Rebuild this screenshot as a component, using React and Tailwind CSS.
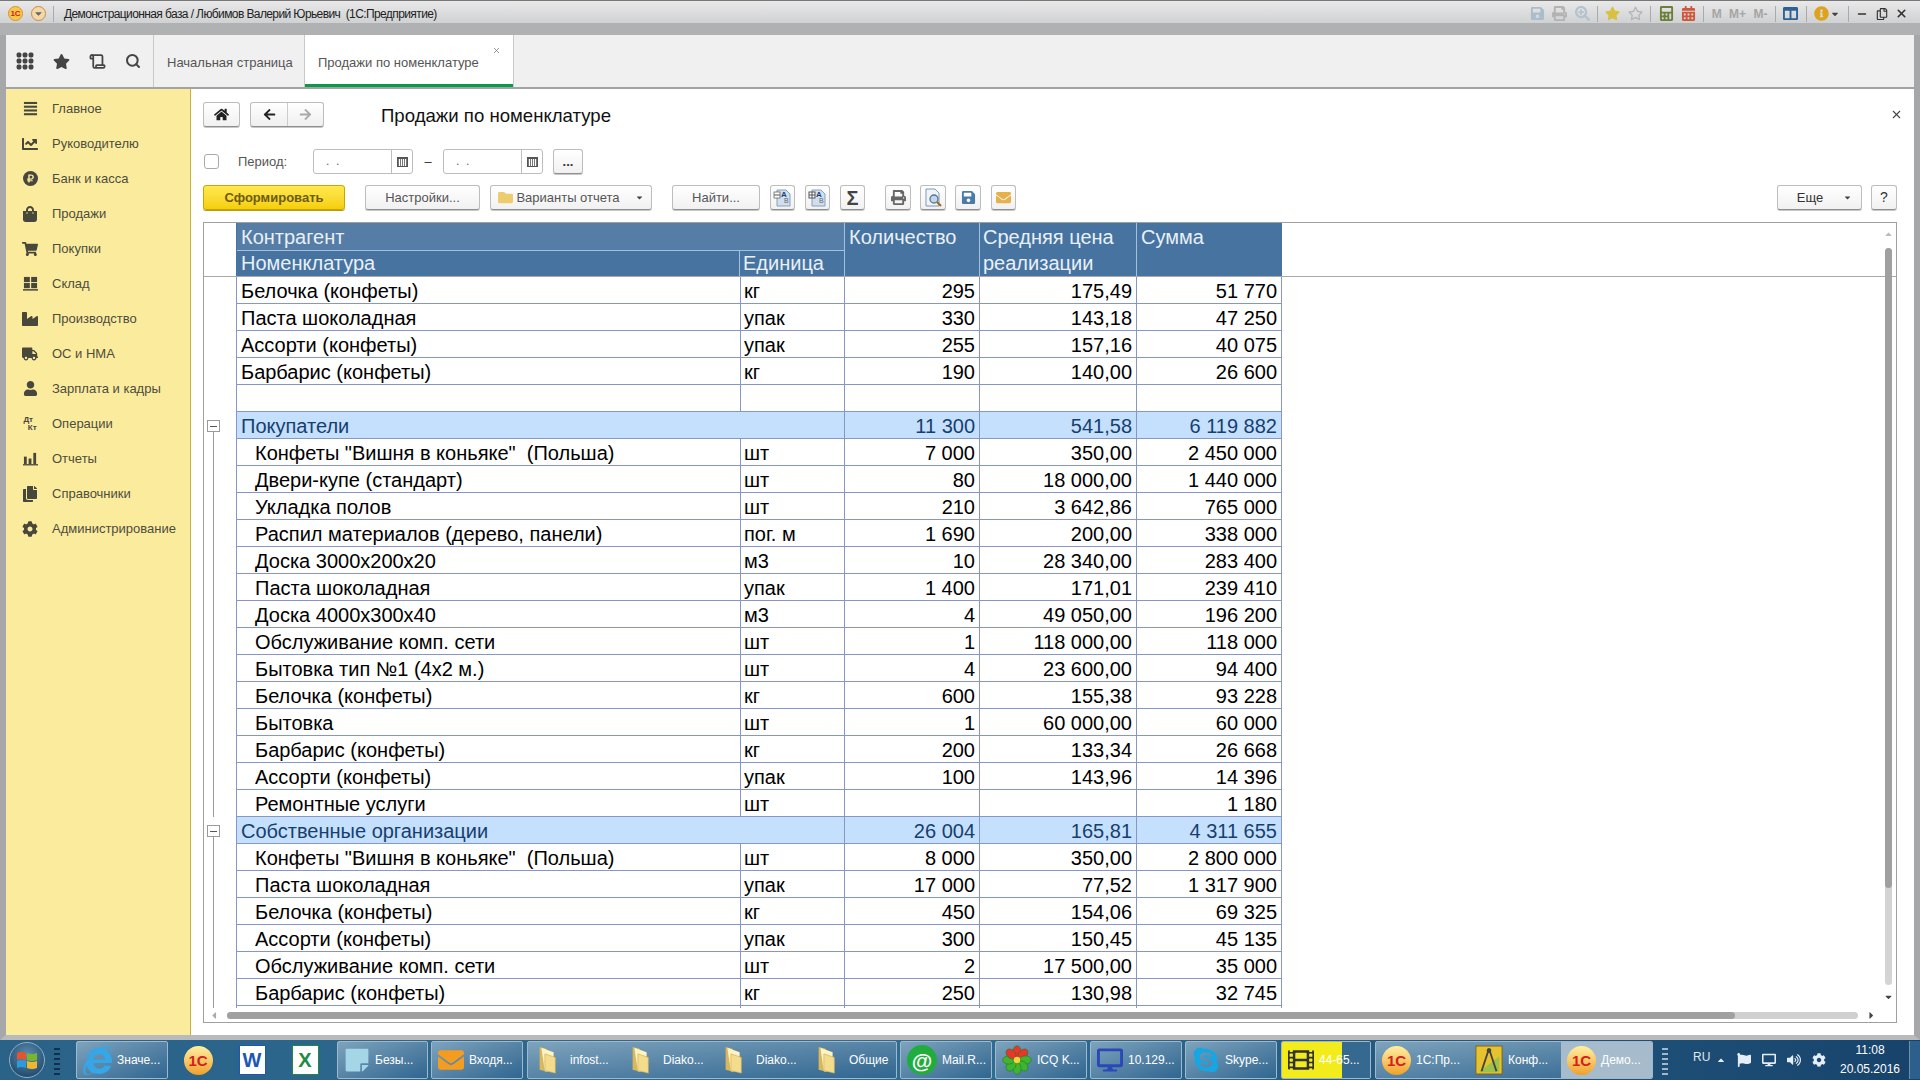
import {
  FaChartLine, FaRubleSign, FaShoppingBag, FaShoppingCart, FaIndustry, FaTruck, FaUser,
  FaCog, FaHome, FaStar, FaArrowLeft, FaArrowRight, FaInternetExplorer, FaSkype,
  FaSave, FaPrint, FaEnvelope, FaDesktop, FaFlag, FaVolumeUp,
  FaFilm, FaStickyNote, FaCaretDown, FaCaretUp, FaCaretLeft, FaCaretRight, FaRegCopy, FaSearchPlus,
  FaRegStar, FaCalculator, FaCalendarAlt, FaInfoCircle, FaColumns, FaCopy, FaFolder,
} from "react-icons/fa";
import { X, Minus, Scroll, Search } from "lucide-react";

function FourBars({ className }) {
  return (
    <svg viewBox="0 0 16 16" className={className} fill="currentColor">
      <rect x="1" y="1" width="14" height="2.2" />
      <rect x="1" y="5" width="14" height="2.2" />
      <rect x="1" y="9" width="14" height="2.2" />
      <rect x="1" y="13" width="14" height="2.2" />
    </svg>
  );
}

function Warehouse({ className }) {
  return (
    <svg viewBox="0 0 16 16" className={className} fill="currentColor">
      <rect x="1" y="1" width="6.3" height="5.5" />
      <rect x="8.7" y="1" width="6.3" height="5.5" />
      <rect x="1" y="7.5" width="6.3" height="5.5" />
      <rect x="8.7" y="7.5" width="6.3" height="5.5" />
      <rect x="0" y="14" width="16" height="1.6" />
    </svg>
  );
}

function ReportBars({ className }) {
  return (
    <svg viewBox="0 0 16 16" className={className} fill="currentColor">
      <rect x="1" y="6" width="3" height="8" />
      <rect x="6" y="8" width="3" height="6" />
      <rect x="11" y="2" width="3" height="12" />
      <rect x="0" y="14" width="16" height="1.4" />
    </svg>
  );
}

function DotGrid({ className }) {
  const dots = [3, 9, 15];
  return (
    <svg viewBox="0 0 18 18" className={className} fill="currentColor">
      {dots.map((y) => dots.map((x) => <rect key={`${x}-${y}`} x={x - 2.4} y={y - 2.4} width="4.8" height="4.8" rx="1.6" />))}
    </svg>
  );
}

function DocAB({ grid }) {
  return (
    <svg viewBox="0 0 20 20" className="h-[20px] w-[20px]">
      <path d="M4 2h9l4 4v12H4z" fill="#cfdff0" stroke="#8aa0b8" />
      <rect x="1" y="4" width="6" height="6" fill="#fff" stroke="#555" strokeWidth={grid ? 1 : 0.7} />
      <path d="M1 7h6" stroke="#555" />
      {grid && <path d="M4 4v6" stroke="#555" />}
      <text x="8" y="9" fontSize="8" fontWeight="700" fill="#1c3f78">A</text>
      <text x="11" y="15" fontSize="7" fill="#666">B</text>
    </svg>
  );
}

function DocLens() {
  return (
    <svg viewBox="0 0 20 20" className="h-[20px] w-[20px]">
      <path d="M3 1h9l4 4v13H3z" fill="#eef4fa" stroke="#7f9ab5" />
      <circle cx="11" cy="11" r="4" fill="#bcd7ef" stroke="#5d7488" strokeWidth="1.3" />
      <path d="M14 14l4 4" stroke="#a5682a" strokeWidth="2.2" />
    </svg>
  );
}

function TallFolder() {
  return (
    <svg viewBox="0 0 24 34" className="ml-[3px] mr-[7px] h-[30px] w-[21px] shrink-0">
      <path d="M3 2l8 2v26l-8-2z" fill="#d9b75c" />
      <path d="M5 3l14 5v22H9z" fill="#fff3c4" />
      <path d="M9 10l12 4v18l-12-3z" fill="#f3dc8c" stroke="#c9a94e" strokeWidth="0.7" />
    </svg>
  );
}

function IcqFlower() {
  const petals = [0, 45, 90, 135, 180, 225, 270, 315];
  return (
    <svg viewBox="0 0 32 32" className="h-[30px] w-[30px] shrink-0">
      {petals.map((a) => (
        <ellipse key={a} cx="16" cy="7" rx="4.4" ry="6.2" fill={a === 45 || a === 315 || a === 0 ? "#e6372a" : "#3fb52f"} stroke="#1f7a1c" strokeWidth="0.6" transform={`rotate(${a} 16 16)`} />
      ))}
      <circle cx="16" cy="16" r="3.4" fill="#f7d23e" />
    </svg>
  );
}

function MailBubble() {
  return (
    <span className="flex h-[30px] w-[30px] shrink-0 items-center justify-center rounded-full bg-[#21ad3e] text-[21px] font-bold leading-none text-white">@</span>
  );
}

function Compass() {
  return (
    <svg viewBox="0 0 30 32" className="h-[32px] w-[28px] shrink-0">
      <rect x="1" y="1" width="28" height="30" fill="#e7c22e" stroke="#7d6316" />
      <path d="M4 29L26 29 26 12z" fill="#9cc24a" />
      <path d="M15 4L7 28M15 4l8 24" stroke="#444" strokeWidth="2" fill="none" />
      <circle cx="15" cy="6" r="2.5" fill="#444" />
    </svg>
  );
}

function Orb() {
  return (
    <div className="flex h-[36px] w-[36px] items-center justify-center rounded-full border border-[#8fb0c8] bg-[radial-gradient(circle_at_50%_35%,#5d8db0,#123a5c)]">
      <svg viewBox="0 0 24 20" className="h-[20px] w-[24px]">
        <path d="M2 3q4-2 9 0v7q-5-2-9 0z" fill="#e8532c" />
        <path d="M12 3q5 2 10 0v7q-5 2-10 0z" fill="#7ab62c" />
        <path d="M2 11q4-2 9 0v7q-5-2-9 0z" fill="#2c9bdc" />
        <path d="M12 11q5 2 10 0v7q-5 2-10 0z" fill="#f0b72c" />
      </svg>
    </div>
  );
}

const menu = [
  [FourBars, "Главное", "h-[15px] w-[15px]"],
  [FaChartLine, "Руководителю", "text-[16px]"],
  [FaRubleSign, "Банк и касса", "round"],
  [FaShoppingBag, "Продажи", "text-[16px]"],
  [FaShoppingCart, "Покупки", "text-[16px]"],
  [Warehouse, "Склад", "h-[15px] w-[15px]"],
  [FaIndustry, "Производство", "text-[16px]"],
  [FaTruck, "ОС и НМА", "text-[16px]"],
  [FaUser, "Зарплата и кадры", "text-[15px]"],
  [null, "Операции", ""],
  [ReportBars, "Отчеты", "h-[15px] w-[15px]"],
  [FaCopy, "Справочники", "text-[16px]"],
  [FaCog, "Администрирование", "text-[16px]"],
];

const topRows = [
  ["Белочка (конфеты)", "кг", "295", "175,49", "51 770"],
  ["Паста шоколадная", "упак", "330", "143,18", "47 250"],
  ["Ассорти (конфеты)", "упак", "255", "157,16", "40 075"],
  ["Барбарис (конфеты)", "кг", "190", "140,00", "26 600"],
  ["", "", "", "", ""],
];

const buyers = [
  ['Конфеты "Вишня в коньяке"  (Польша)', "шт", "7 000", "350,00", "2 450 000"],
  ["Двери-купе (стандарт)", "шт", "80", "18 000,00", "1 440 000"],
  ["Укладка полов", "шт", "210", "3 642,86", "765 000"],
  ["Распил материалов (дерево, панели)", "пог. м", "1 690", "200,00", "338 000"],
  ["Доска 3000х200х20", "м3", "10", "28 340,00", "283 400"],
  ["Паста шоколадная", "упак", "1 400", "171,01", "239 410"],
  ["Доска 4000х300х40", "м3", "4", "49 050,00", "196 200"],
  ["Обслуживание комп. сети", "шт", "1", "118 000,00", "118 000"],
  ["Бытовка тип №1 (4х2 м.)", "шт", "4", "23 600,00", "94 400"],
  ["Белочка (конфеты)", "кг", "600", "155,38", "93 228"],
  ["Бытовка", "шт", "1", "60 000,00", "60 000"],
  ["Барбарис (конфеты)", "кг", "200", "133,34", "26 668"],
  ["Ассорти (конфеты)", "упак", "100", "143,96", "14 396"],
  ["Ремонтные услуги", "шт", "", "", "1 180"],
];

const own = [
  ['Конфеты "Вишня в коньяке"  (Польша)', "шт", "8 000", "350,00", "2 800 000"],
  ["Паста шоколадная", "упак", "17 000", "77,52", "1 317 900"],
  ["Белочка (конфеты)", "кг", "450", "154,06", "69 325"],
  ["Ассорти (конфеты)", "упак", "300", "150,45", "45 135"],
  ["Обслуживание комп. сети", "шт", "2", "17 500,00", "35 000"],
  ["Барбарис (конфеты)", "кг", "250", "130,98", "32 745"],
];

function OneC() {
  return (
    <span className="flex h-[29px] w-[29px] shrink-0 items-center justify-center rounded-full bg-gradient-to-b from-[#fff0a0] to-[#f0a020] text-[15px] font-bold leading-none text-[#d3201a]">
      1С
    </span>
  );
}

function Btn({ className = "", children }) {
  return (
    <div className={`flex items-center justify-center rounded-[3px] border border-[#bdbdbd] border-b-[#8f8f8f] bg-gradient-to-b from-white to-[#f1f1f1] shadow-[0_1px_0_#c8c8c8] ${className}`}>
      {children}
    </div>
  );
}

function DateField() {
  return (
    <div className="flex h-[25px] w-[100px] rounded-[3px] border border-[#bdbdbd] bg-white">
      <div className="flex-1 pl-[12px] pt-[5px] text-[12px] leading-none text-[#666]">.&nbsp;&nbsp;.</div>
      <div className="flex w-[21px] items-center justify-center border-l border-[#bdbdbd]">
        <div className="h-[10px] w-[11px] border border-[#555] border-t-2 bg-[repeating-linear-gradient(90deg,#777_0,#777_1px,#fff_1px,#fff_2px)]" />
      </div>
    </div>
  );
}

function Row({ row, even }) {
  const [name, unit, qty, price, sum] = row;
  return (
    <div className="flex h-[27px] shrink-0">
      <div className="w-[33px] shrink-0 border-l border-transparent" />
      <div className={`h-[27px] w-[504px] shrink-0 overflow-hidden whitespace-pre border-b border-l border-[#8696c6] leading-[28px] ${even ? "pl-[18px]" : "pl-[4px]"}`}>{name}</div>
      <div className="h-[27px] w-[104px] shrink-0 border-b border-l border-[#8696c6] pl-[3px] leading-[28px]">{unit}</div>
      <div className="h-[27px] w-[135px] shrink-0 border-b border-l border-[#8696c6] pr-[4px] text-right leading-[28px]">{qty}</div>
      <div className="h-[27px] w-[157px] shrink-0 border-b border-l border-[#8696c6] pr-[4px] text-right leading-[28px]">{price}</div>
      <div className="h-[27px] w-[146px] shrink-0 border-x border-b border-[#8696c6] pr-[4px] text-right leading-[28px]">{sum}</div>
    </div>
  );
}

function GroupRow({ name, qty, price, sum }) {
  return (
    <div className="relative flex h-[27px] shrink-0 text-[#173f6e]">
      <div className="absolute left-[4px] top-[8px] flex h-[12px] w-[13px] items-center justify-center border border-[#9a9a9a] bg-white">
        <div className="h-px w-[7px] bg-[#555]" />
      </div>
      <div className="w-[33px] shrink-0" />
      <div className="h-[27px] w-[608px] shrink-0 border-b border-l border-[#8696c6] bg-[#c5e0fd] pl-[4px] leading-[28px]">{name}</div>
      <div className="h-[27px] w-[135px] shrink-0 border-b border-l border-[#8696c6] bg-[#c5e0fd] pr-[4px] text-right leading-[28px]">{qty}</div>
      <div className="h-[27px] w-[157px] shrink-0 border-b border-l border-[#8696c6] bg-[#c5e0fd] pr-[4px] text-right leading-[28px]">{price}</div>
      <div className="h-[27px] w-[146px] shrink-0 border-x border-b border-[#8696c6] bg-[#c5e0fd] pr-[4px] text-right leading-[28px]">{sum}</div>
    </div>
  );
}

function TreeBlock({ children }) {
  return (
    <div className="relative">
      <div className="absolute bottom-0 left-[10px] top-[20px] w-px bg-[#9a9a9a]" />
      {children}
    </div>
  );
}

function TaskPart({ w, icon, label, className = "" }) {
  return (
    <div className={`flex h-[36px] items-center gap-[5px] pl-[6px] ${w} ${className}`}>
      {icon}
      <span className="whitespace-nowrap text-[12px] text-white">{label}</span>
    </div>
  );
}

function TaskBtn({ children, className = "" }) {
  return (
    <div className={`flex h-[38px] overflow-hidden rounded-[2px] border border-[#9fb8cc] bg-gradient-to-br from-[#7ea3bc] to-[#2f6690] ${className}`}>
      {children}
    </div>
  );
}

export default function App() {
  return (
    <div className="flex h-[1080px] w-[1920px] flex-col overflow-hidden bg-[#f0f0f0] font-['Liberation_Sans',Arial,sans-serif]">
      {/* Заголовок окна */}
      <div className="flex h-[35px] shrink-0 flex-col border-t border-[#777]">
        <div className="flex h-[22px] items-center bg-gradient-to-b from-[#e9e9ea] to-[#d0d1d2] pt-[3px]">
          <div className="ml-[8px] flex h-[15px] w-[15px] items-center justify-center rounded-full border border-[#d9902b] bg-[#fbc94a] text-[8px] font-bold leading-none text-[#d3201a]">1С</div>
          <div className="ml-[8px] flex h-[15px] w-[15px] items-center justify-center rounded-full border border-[#c98a4b] bg-[#f4d9a8]">
            <FaCaretDown className="text-[11px] text-[#666]" />
          </div>
          <div className="ml-[7px] h-[16px] w-px bg-[#aaa]" />
          <span className="ml-[10px] whitespace-pre text-[12px] tracking-[-0.6px] text-[#222]">Демонстрационная база / Любимов Валерий Юрьевич  (1С:Предприятие)</span>
          <div className="ml-auto flex items-center gap-[7.4px] pr-[12px] text-[15px]">
            <FaSave className="text-[#a9bdcb]" />
            <FaPrint className="text-[#b3b3b3]" />
            <FaSearchPlus className="text-[#b3c2cf]" />
            <div className="h-[16px] w-px bg-[#aaa]" />
            <FaStar className="text-[#d8c040]" />
            <FaRegStar className="text-[#b3b3b3]" />
            <div className="h-[16px] w-px bg-[#aaa]" />
            <FaCalculator className="text-[#6b7f3a]" />
            <FaCalendarAlt className="text-[#d0553a]" />
            <div className="h-[16px] w-px bg-[#aaa]" />
            <span className="text-[12px] font-bold text-[#a5a5a5]">M</span>
            <span className="text-[12px] font-bold text-[#a5a5a5]">M+</span>
            <span className="text-[12px] font-bold text-[#a5a5a5]">M-</span>
            <div className="h-[16px] w-px bg-[#aaa]" />
            <FaColumns className="text-[#2c6196]" />
            <div className="h-[16px] w-px bg-[#aaa]" />
            <FaInfoCircle className="text-[#dfa21f]" />
            <FaCaretDown className="-ml-[6px] text-[10px] text-[#444]" />
            <div className="h-[16px] w-px bg-[#aaa]" />
            <Minus size={12} strokeWidth={3} className="text-[#333]" />
            <FaRegCopy className="text-[12px] text-[#333]" />
            <X size={13} strokeWidth={3} className="text-[#333]" />
          </div>
        </div>
        <div className="h-[12px] bg-[#b0b1b3]" />
      </div>

      <div className="flex min-h-0 flex-1 border-x-[6px] border-[#a6a7a9] border-b-[5px] border-b-[#b9babb] shadow-[inset_-3px_0_0_#444]">
        <div className="flex min-w-0 flex-1 flex-col">
          {/* Вкладки */}
          <div className="flex h-[54px] shrink-0 border-b-2 border-[#a3a3a3] bg-[#f0f0f0]">
            <div className="flex w-[148px] items-center gap-[19px] border-r border-[#c9c9c9] pl-[10px] text-[#444]">
              <DotGrid className="h-[18px] w-[18px]" />
              <FaStar className="text-[17px]" />
              <Scroll size={17} strokeWidth={2.5} />
              <Search size={16} strokeWidth={3} />
            </div>
            <div className="flex w-[151px] items-center border-r border-[#c9c9c9] pl-[13px] pt-[3px] text-[13px] text-[#555]">Начальная страница</div>
            <div className="relative flex w-[209px] items-center border-r border-[#c9c9c9] bg-white pl-[13px] pt-[3px] text-[13px] text-[#555] shadow-[inset_0_-3px_0_#0a9a4c]">
              Продажи по номенклатуре
              <X size={9} className="absolute right-[12px] top-[11px] text-[#777]" />
            </div>
          </div>

          <div className="flex min-h-0 flex-1">
            {/* Меню разделов */}
            <div className="flex w-[185px] shrink-0 flex-col border-r border-[#c9b03b] bg-[#fbeb9d] pt-[2px]">
              {menu.map(([Icon, label, size]) => (
                <div key={label} className="flex h-[35px] shrink-0 items-center text-[13px] text-[#4d4d3e]">
                  <div className="flex w-[46px] items-center justify-center pl-[2px]">
                    {size === "round" ? (
                      <span className="flex h-[15px] w-[15px] items-center justify-center rounded-full bg-[#47473c]">
                        <Icon className="text-[9px] text-[#fbeb9d]" />
                      </span>
                    ) : Icon ? (
                      <Icon className={`${size} text-[#47473c]`} />
                    ) : (
                      <span className="text-[8px] font-bold leading-[8px] text-[#47473c]">Дт<br />&nbsp;&nbsp;Кт</span>
                    )}
                  </div>
                  <span>{label}</span>
                </div>
              ))}
            </div>

            {/* Отчет */}
            <div className="flex min-w-0 flex-1 flex-col bg-white pl-[12px] pr-[17px]">
              <div className="relative flex h-[60px] shrink-0 items-start pt-[13px]">
                <Btn className="h-[25px] w-[37px] text-[#222]"><FaHome className="text-[15px]" /></Btn>
                <div className="ml-[10px] flex h-[25px] w-[74px] rounded-[3px] border border-[#bdbdbd] border-b-[#8f8f8f] bg-gradient-to-b from-white to-[#efefef] shadow-[0_1px_0_#c8c8c8]">
                  <div className="flex w-[37px] items-center justify-center border-r border-[#ccc]"><FaArrowLeft className="text-[13px] text-[#222]" /></div>
                  <div className="flex flex-1 items-center justify-center"><FaArrowRight className="text-[13px] text-[#aaa]" /></div>
                </div>
                <div className="ml-[57px] mt-[1px] text-[18.6px] leading-[25px] text-[#111]">Продажи по номенклатуре</div>
                <X size={13} className="ml-auto mr-[-6px] mt-[6px] text-[#444]" />
              </div>

              <div className="flex h-[25px] shrink-0 items-center">
                <div className="ml-[1px] h-[15px] w-[15px] rounded-[3px] border border-[#aaa] bg-white" />
                <span className="ml-[19px] w-[75px] text-[13px] text-[#555]">Период:</span>
                <DateField />
                <span className="w-[30px] text-center text-[13px] text-[#333]">–</span>
                <DateField />
                <Btn className="ml-[10px] h-[25px] w-[30px] text-[13px] font-bold text-[#333]">...</Btn>
              </div>

              <div className="mt-[11px] flex h-[25px] shrink-0 items-center">
                <div className="flex h-[25px] w-[142px] items-center justify-center rounded-[3px] border border-[#c8a800] bg-gradient-to-b from-[#ffe94d] to-[#f5cf00] text-[13px] font-bold text-[#6d5a12] shadow-[0_1px_0_#b39b22]">Сформировать</div>
                <Btn className="ml-[20px] h-[25px] w-[115px] text-[13px] text-[#555]">Настройки...</Btn>
                <Btn className="ml-[10px] h-[25px] w-[162px] text-[13px] text-[#555]">
                  <FaFolder className="mr-[3px] text-[15px] text-[#edcb6f]" />
                  Варианты отчета
                  <FaCaretDown className="ml-[15px] text-[9px] text-[#444]" />
                </Btn>
                <Btn className="ml-[20px] h-[25px] w-[88px] text-[13px] text-[#555]">Найти...</Btn>
                <Btn className="ml-[10px] h-[25px] w-[25px]"><DocAB /></Btn>
                <Btn className="ml-[10px] h-[25px] w-[25px]"><DocAB grid /></Btn>
                <Btn className="ml-[10px] h-[25px] w-[25px] text-[20px] font-bold text-[#444]">Σ</Btn>
                <Btn className="ml-[20px] h-[25px] w-[26px] text-[#666]"><FaPrint className="text-[15px]" /></Btn>
                <Btn className="ml-[9px] h-[25px] w-[26px]"><DocLens /></Btn>
                <Btn className="ml-[9px] h-[25px] w-[26px] text-[#4a7ba6]"><FaSave className="text-[15px]" /></Btn>
                <Btn className="ml-[10px] h-[25px] w-[25px] text-[#e6b04a]"><FaEnvelope className="text-[15px]" /></Btn>
                <Btn className="ml-auto h-[25px] w-[85px] pl-[10px] text-[13px] text-[#333]">
                  Еще
                  <FaCaretDown className="ml-[20px] text-[9px] text-[#444]" />
                </Btn>
                <Btn className="ml-[9px] h-[25px] w-[26px] text-[14px] text-[#333]">?</Btn>
              </div>

              {/* Таблица */}
              <div className="relative mt-[12px] flex h-[801px] shrink-0 flex-col border border-[#a0a0a0] bg-white text-[20px] leading-none text-black">
                <div className="h-[785px] overflow-hidden">
                  <div className="flex h-[54px] border-b border-[#a8a8a8]">
                    <div className="w-[32px] shrink-0" />
                    <div className="flex h-[53px] w-[608px] shrink-0 flex-col border-l border-[#46739f] text-[#e9f0f7]">
                      <div className="h-[28px] border-b border-[#a5c0dc] bg-[#557da6] pl-[4px] leading-[28px]">Контрагент</div>
                      <div className="flex flex-1 bg-[#46739f]">
                        <div className="w-[503px] border-r border-[#a5c0dc] pl-[4px] leading-[25px]">Номенклатура</div>
                        <div className="flex-1 pl-[3px] leading-[25px]">Единица</div>
                      </div>
                    </div>
                    <div className="h-[53px] w-[135px] shrink-0 border-l border-[#a5c0dc] bg-[#46739f] pl-[4px] leading-[28px] text-[#e9f0f7]">Количество</div>
                    <div className="h-[53px] w-[157px] shrink-0 border-l border-[#a5c0dc] bg-[#46739f] pl-[3px] pt-[1px] leading-[26px] text-[#e9f0f7]">Средняя цена<br />реализации</div>
                    <div className="h-[53px] w-[146px] shrink-0 border-l border-[#a5c0dc] bg-[#46739f] pl-[4px] leading-[28px] text-[#e9f0f7]">Сумма</div>
                  </div>
                  <div className="-ml-px">
                    {topRows.map((r, i) => <Row key={i} row={r} />)}
                    <TreeBlock>
                      <GroupRow name="Покупатели" qty="11 300" price="541,58" sum="6 119 882" />
                      {buyers.map((r, i) => <Row key={i} row={r} even />)}
                    </TreeBlock>
                    <TreeBlock>
                      <GroupRow name="Собственные организации" qty="26 004" price="165,81" sum="4 311 655" />
                      {own.map((r, i) => <Row key={i} row={r} even />)}
                      <Row row={["", "", "", "", ""]} />
                    </TreeBlock>
                  </div>
                </div>

                {/* Горизонтальная прокрутка */}
                <div className="flex h-[14px] items-center pl-[5px]">
                  <FaCaretLeft className="mr-[8px] w-[10px] text-[11px] text-[#aaa]" />
                  <div className="h-[7px] w-[1631px] rounded-full bg-[#d0d0d0]">
                    <div className="h-[7px] w-[1508px] rounded-full bg-[#a0a0a0]" />
                  </div>
                  <FaCaretRight className="ml-[8px] text-[11px] text-[#444]" />
                </div>

                {/* Вертикальная прокрутка */}
                <div className="absolute right-[3px] top-[6px] flex w-[9px] flex-col items-center">
                  <FaCaretUp className="h-[10px] text-[11px] text-[#bbb]" />
                  <div className="mt-[9px] h-[737px] w-[7px] rounded-full bg-[#d4d4d4]">
                    <div className="h-[640px] w-[7px] rounded-full bg-[#a0a0a0]" />
                  </div>
                  <FaCaretDown className="mt-[7px] h-[10px] text-[11px] text-[#444]" />
                </div>
              </div>
            </div>
          </div>
        </div>
      </div>

      {/* Панель задач */}
      <div className="flex h-[40px] shrink-0 items-center gap-[3px] bg-gradient-to-r from-[#2a6288] via-[#2f6d92] to-[#17436b]">
        <div className="flex w-[73px] items-center pl-[9px]">
          <Orb />
          <div className="ml-[9px] h-[30px] w-[6px] bg-[repeating-linear-gradient(0deg,#10304f_0,#10304f_2px,transparent_2px,transparent_5px)]" />
        </div>
        <TaskBtn><TaskPart w="w-[90px]" label="Значе..." icon={<FaInternetExplorer className="shrink-0 text-[29px] text-[#35a7e8]" />} /></TaskBtn>
        <div className="ml-[7px] flex w-[40px] justify-center"><OneC /></div>
        <div className="ml-[11px] flex w-[40px] justify-center">
          <span className="flex h-[30px] w-[27px] items-center justify-center border border-[#1d57b5] bg-white text-[20px] font-bold leading-none text-[#1d57b5]">W</span>
        </div>
        <div className="ml-[10px] flex w-[40px] justify-center">
          <span className="flex h-[30px] w-[27px] items-center justify-center border border-[#1f8a43] bg-white text-[20px] font-bold leading-none text-[#1f8a43]">X</span>
        </div>
        <TaskBtn className="ml-[9px]"><TaskPart w="w-[89px]" label="Безы..." icon={<FaStickyNote className="shrink-0 text-[26px] text-[#a5d6e8]" />} /></TaskBtn>
        <TaskBtn><TaskPart w="w-[90px]" label="Входя..." icon={<FaEnvelope className="shrink-0 text-[26px] text-[#f39c1f]" />} /></TaskBtn>
        <TaskBtn className="ml-[1px]">
          <TaskPart w="w-[93px]" label="infost..." icon={<TallFolder />} />
          <TaskPart w="w-[93px]" label="Diako..." icon={<TallFolder />} />
          <TaskPart w="w-[93px]" label="Diako..." icon={<TallFolder />} />
          <TaskPart w="w-[89px]" label="Общие" icon={<TallFolder />} />
        </TaskBtn>
        <TaskBtn><TaskPart w="w-[90px]" label="Mail.R..." icon={<MailBubble />} /></TaskBtn>
        <TaskBtn><TaskPart w="w-[90px]" label="ICQ K..." icon={<IcqFlower />} /></TaskBtn>
        <TaskBtn><TaskPart w="w-[90px]" label="10.129..." icon={<FaDesktop className="shrink-0 text-[26px] text-[#2a49b8]" />} /></TaskBtn>
        <TaskBtn><TaskPart w="w-[90px]" label="Skype..." icon={<FaSkype className="shrink-0 text-[28px] text-[#16a6e4]" />} /></TaskBtn>
        <TaskBtn className="ml-[1px]">
          <TaskPart w="w-[88px]" className="bg-gradient-to-r from-[#f2ec1c] from-[68%] to-[#35698f] to-[68%]" label="44-65..." icon={<FaFilm className="shrink-0 text-[26px] text-[#333]" />} />
        </TaskBtn>
        <TaskBtn className="ml-[1px]">
          <TaskPart w="w-[93px]" label="1С:Пр..." icon={<OneC />} />
          <TaskPart w="w-[92px]" label="Конф..." icon={<Compass />} />
          <TaskPart w="w-[91px]" className="bg-[#a6bccd]" label="Демо..." icon={<OneC />} />
        </TaskBtn>
        <div className="ml-[6px] h-[30px] w-[6px] bg-[repeating-linear-gradient(0deg,#9fb8cc_0,#9fb8cc_2px,transparent_2px,transparent_5px)]" />
        <span className="ml-[22px] -mt-[6px] text-[12px] text-[#dfe8f0]">RU</span>
        <div className="ml-[3px] flex items-center gap-[11px] text-[14px] text-[#e6eef5]">
          <FaCaretUp className="text-[10px]" />
          <FaFlag />
          <FaDesktop />
          <FaVolumeUp />
          <FaCog />
        </div>
        <div className="ml-auto w-[70px] text-center text-[12px] leading-[19px] text-white">
          11:08<br />20.05.2016
        </div>
        <div className="ml-px h-[38px] w-[11px] border-l border-[#6f8fa8] bg-[#2c5f8b]" />
      </div>
    </div>
  );
}
